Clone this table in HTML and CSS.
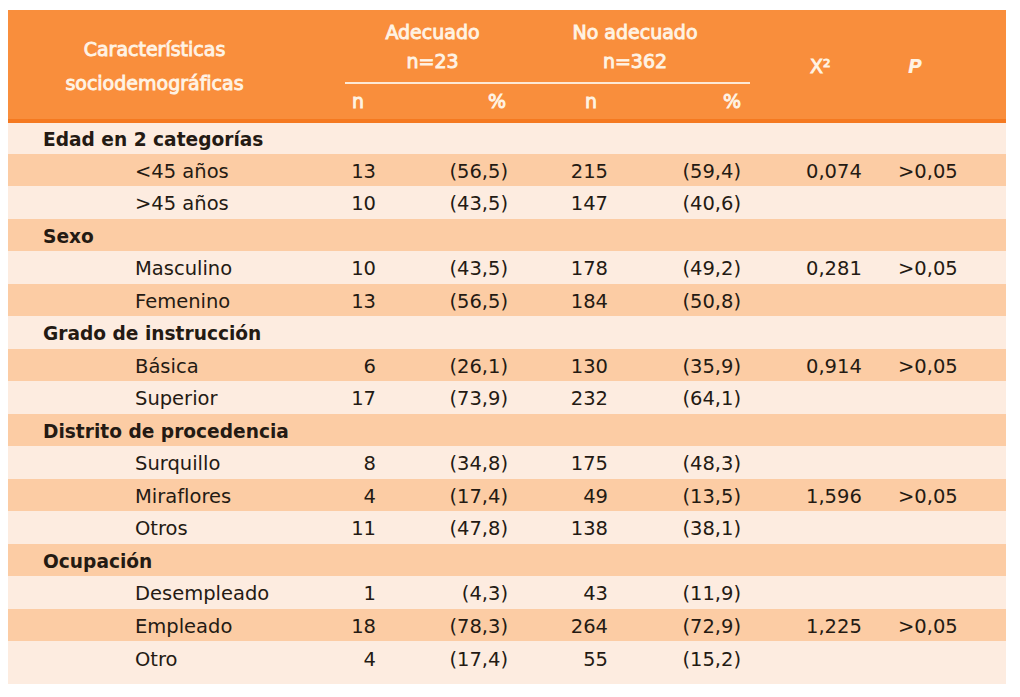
FILE: index.html
```html
<!DOCTYPE html>
<html lang="es">
<head>
<meta charset="utf-8">
<title>Características sociodemográficas</title>
<link rel="stylesheet" href="styles.css">
</head>
<body>
<table class="tbl">
  <colgroup>
    <col class="c-label"><col class="c-n1"><col class="c-p1"><col class="c-n2"><col class="c-p2"><col class="c-x"><col class="c-pv">
  </colgroup>
  <thead>
    <tr class="h1">
      <th rowspan="2" class="h-title">Características<br>sociodemográficas</th>
      <th colspan="2" class="h-group">Adecuado<br>n=23</th>
      <th colspan="2" class="h-group">No adecuado<br>n=362</th>
      <th rowspan="2" class="h-x">X²</th>
      <th rowspan="2" class="h-p">P</th>
    </tr>
    <tr class="h2">
      <th class="h-n1">n</th>
      <th class="h-p1">%</th>
      <th class="h-n2">n</th>
      <th class="h-p2">%</th>
    </tr>
  </thead>
  <tbody>
    <tr class="light cat"><td>Edad en 2 categorías</td><td></td><td></td><td></td><td></td><td></td><td></td></tr>
    <tr class="dark"><td class="sub">&lt;45 años</td><td class="n1">13</td><td class="p1">(56,5)</td><td class="n2">215</td><td class="p2">(59,4)</td><td class="x">0,074</td><td class="pv">&gt;0,05</td></tr>
    <tr class="light"><td class="sub">&gt;45 años</td><td class="n1">10</td><td class="p1">(43,5)</td><td class="n2">147</td><td class="p2">(40,6)</td><td></td><td></td></tr>
    <tr class="dark cat"><td>Sexo</td><td></td><td></td><td></td><td></td><td></td><td></td></tr>
    <tr class="light"><td class="sub">Masculino</td><td class="n1">10</td><td class="p1">(43,5)</td><td class="n2">178</td><td class="p2">(49,2)</td><td class="x">0,281</td><td class="pv">&gt;0,05</td></tr>
    <tr class="dark"><td class="sub">Femenino</td><td class="n1">13</td><td class="p1">(56,5)</td><td class="n2">184</td><td class="p2">(50,8)</td><td></td><td></td></tr>
    <tr class="light cat"><td>Grado de instrucción</td><td></td><td></td><td></td><td></td><td></td><td></td></tr>
    <tr class="dark"><td class="sub">Básica</td><td class="n1">6</td><td class="p1">(26,1)</td><td class="n2">130</td><td class="p2">(35,9)</td><td class="x">0,914</td><td class="pv">&gt;0,05</td></tr>
    <tr class="light"><td class="sub">Superior</td><td class="n1">17</td><td class="p1">(73,9)</td><td class="n2">232</td><td class="p2">(64,1)</td><td></td><td></td></tr>
    <tr class="dark cat"><td>Distrito de procedencia</td><td></td><td></td><td></td><td></td><td></td><td></td></tr>
    <tr class="light"><td class="sub">Surquillo</td><td class="n1">8</td><td class="p1">(34,8)</td><td class="n2">175</td><td class="p2">(48,3)</td><td></td><td></td></tr>
    <tr class="dark"><td class="sub">Miraflores</td><td class="n1">4</td><td class="p1">(17,4)</td><td class="n2">49</td><td class="p2">(13,5)</td><td class="x">1,596</td><td class="pv">&gt;0,05</td></tr>
    <tr class="light"><td class="sub">Otros</td><td class="n1">11</td><td class="p1">(47,8)</td><td class="n2">138</td><td class="p2">(38,1)</td><td></td><td></td></tr>
    <tr class="dark cat"><td>Ocupación</td><td></td><td></td><td></td><td></td><td></td><td></td></tr>
    <tr class="light"><td class="sub">Desempleado</td><td class="n1">1</td><td class="p1">(4,3)</td><td class="n2">43</td><td class="p2">(11,9)</td><td></td><td></td></tr>
    <tr class="dark"><td class="sub">Empleado</td><td class="n1">18</td><td class="p1">(78,3)</td><td class="n2">264</td><td class="p2">(72,9)</td><td class="x">1,225</td><td class="pv">&gt;0,05</td></tr>
    <tr class="light last"><td class="sub">Otro</td><td class="n1">4</td><td class="p1">(17,4)</td><td class="n2">55</td><td class="p2">(15,2)</td><td></td><td></td></tr>
  </tbody>
</table>
</body>
</html>
```

FILE: styles.css
```css
html, body {
  margin: 0;
  padding: 0;
  background: #ffffff;
}

body {
  padding: 10px 0 0 8px;
  font-family: "DejaVu Sans", Verdana, sans-serif;
}

.tbl {
  border-collapse: collapse;
  border-spacing: 0;
  width: 998px;
  table-layout: fixed;
  color: #241a13;
  font-size: 19.5px;
}

.c-label { width: 337px; }
.c-n1 { width: 45px; }
.c-p1 { width: 130px; }
.c-n2 { width: 100px; }
.c-p2 { width: 130px; }
.c-x { width: 130px; }
.c-pv { width: 126px; }

.tbl th {
  background: #f98e3c;
  color: #fff3e4;
  font-weight: 400;
  font-size: 19px;
  padding: 0;
  -webkit-text-stroke: 0.9px #fff3e4;
}

.tbl thead tr.h1 { height: 73px; }
.tbl thead tr.h2 { height: 38px; }
.h2 th, .h-title, .h-x, .h-p { border-bottom: 4px solid #f57920; }

.h-title {
  text-align: center;
  line-height: 34px;
  padding: 2px 44px 0 0 !important;
}

.h-group {
  text-align: center;
  line-height: 29px;
  vertical-align: top;
  padding-top: 8px !important;
  border-bottom: 2px solid #fde9d6;
}

.h-x { text-align: left; padding-left: 60px !important; padding-top: 2px !important; }
.h-p { text-align: left; padding-left: 28px !important; padding-top: 2px !important; font-style: italic; font-weight: 700 !important; -webkit-text-stroke: 0 !important; }

.h2 th { padding-bottom: 2px !important; }
.h-n1 { text-align: left; padding-left: 7px !important; }
.h-p1 { text-align: right; padding-right: 14px !important; }
.h-n2 { text-align: left; padding-left: 65px !important; }
.h-p2 { text-align: right; padding-right: 9px !important; }

.tbl tbody tr { height: 32px; }
.tbl tbody tr:nth-child(odd) { height: 33px; }
.tbl tbody tr.last { height: 43px; }
.tbl tbody tr.last td { padding-bottom: 8px !important; }

.tbl td {
  padding: 2px 0 0 0;
  white-space: nowrap;
  vertical-align: middle;
}

.light td { background: #fdece0; }
.dark td { background: #fccca4; }

.cat td:first-child {
  font-weight: 700;
  font-size: 18.6px;
  padding-left: 35px;
}

.sub { padding-left: 127px !important; }

.n1 { text-align: right; padding-right: 14px !important; }
.p1 { text-align: right; padding-right: 12px !important; }
.n2 { text-align: right; padding-right: 12px !important; }
.p2 { text-align: right; padding-right: 9px !important; }
.x { text-align: left; padding-left: 56px !important; }
.pv { text-align: left; padding-left: 18px !important; }
```
